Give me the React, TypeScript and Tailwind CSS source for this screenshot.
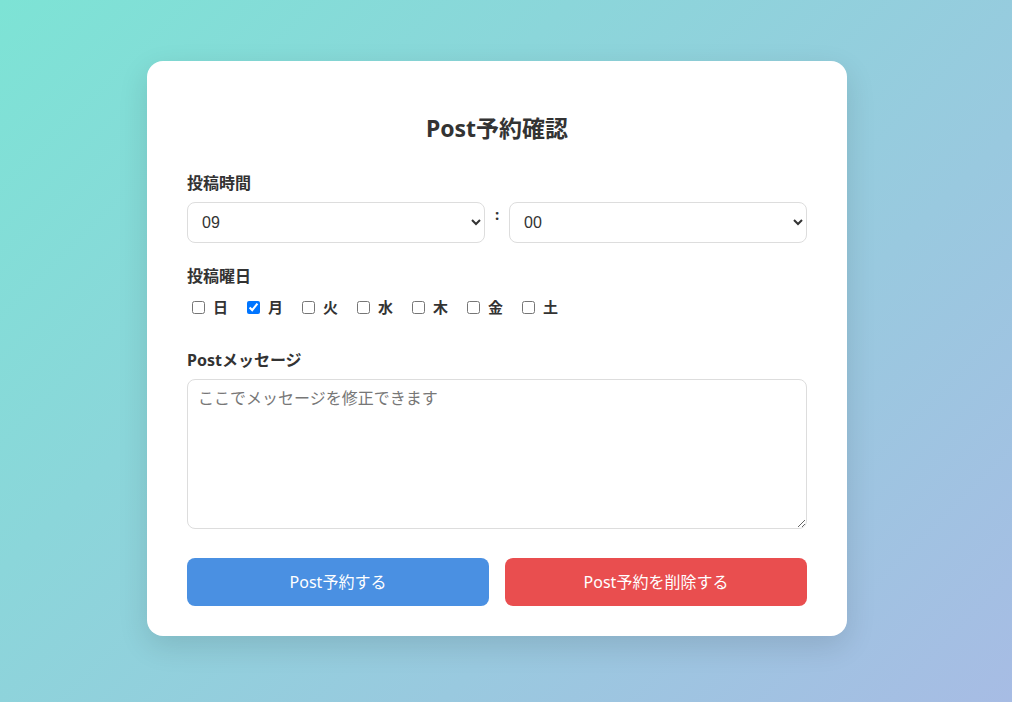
import { useState } from "react";

const days = ["日", "月", "火", "水", "木", "金", "土"];

export default function App() {
  const [checked, setChecked] = useState<string[]>(["月"]);
  const [hour, setHour] = useState("09");
  const [minute, setMinute] = useState("00");

  const toggle = (d: string) =>
    setChecked((prev) => (prev.includes(d) ? prev.filter((x) => x !== d) : [...prev, d]));

  return (
    <div
      className="min-h-screen w-full flex justify-center pt-[61px] pr-[18px] bg-[linear-gradient(135deg,#7de3d5_0%,#a7bce4_100%)] text-[#333]"
      style={{ fontFamily: '"Noto Sans", "Noto Sans CJK JP", sans-serif' }}
    >
      <div className="w-[700px] h-[575px] bg-white rounded-2xl px-10 pt-[51px] shadow-[0_10px_30px_rgba(0,0,0,0.12)]">
        <h2 className="text-[23px] leading-[33px] font-bold text-center">Post予約確認</h2>

        <div className="mt-[27px] text-[16px] leading-[22px] font-bold">投稿時間</div>
        <div className="mt-[8px] flex items-start gap-[10px]">
          <select
            value={hour}
            onChange={(e) => setHour(e.target.value)}
            className="flex-1 h-[41px] border border-[#ddd] rounded-lg pl-[10px] pr-3 text-[16px] bg-white"
            style={{ fontFamily: '"Liberation Sans", Arial, sans-serif' }}
          >
            {Array.from({ length: 24 }, (_, i) => String(i).padStart(2, "0")).map((h) => (
              <option key={h} value={h}>{h}</option>
            ))}
          </select>
          <span className="text-[15px] font-bold leading-[22px] mt-[1px]">:</span>
          <select
            value={minute}
            onChange={(e) => setMinute(e.target.value)}
            className="flex-1 h-[41px] border border-[#ddd] rounded-lg pl-[10px] pr-3 text-[16px] bg-white"
            style={{ fontFamily: '"Liberation Sans", Arial, sans-serif' }}
          >
            {["00", "15", "30", "45"].map((m) => (
              <option key={m} value={m}>{m}</option>
            ))}
          </select>
        </div>

        <div className="mt-[22px] text-[16px] leading-[22px] font-bold">投稿曜日</div>
        <div className="mt-[10px] flex items-center h-5">
          {days.map((d) => (
            <label key={d} className="flex items-center mr-[14px] cursor-pointer">
              <input
                type="checkbox"
                checked={checked.includes(d)}
                onChange={() => toggle(d)}
                className="w-[13px] h-[13px] ml-[5px] mr-[8px]"
              />
              <span className="text-[15px] font-bold leading-5">{d}</span>
            </label>
          ))}
        </div>

        <div className="mt-[32px] text-[16px] leading-[22px] font-bold">Postメッセージ</div>
        <textarea
          className="mt-[8px] block w-full h-[150px] border border-[#ddd] rounded-lg px-[10px] py-[6px] text-[16px] leading-6 placeholder:text-[#777] resize-y"
          placeholder="ここでメッセージを修正できます"
        />

        <div className="mt-[29px] flex gap-4">
          <button className="flex-1 h-12 rounded-lg bg-[#4a90e2] text-white text-[16px]">Post予約する</button>
          <button className="flex-1 h-12 rounded-lg bg-[#e94e4f] text-white text-[16px]">Post予約を削除する</button>
        </div>
      </div>
    </div>
  );
}
